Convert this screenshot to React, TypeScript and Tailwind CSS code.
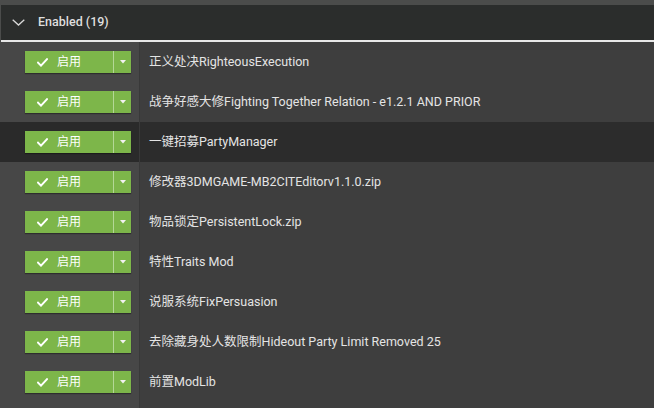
import React from 'react';

const mods = [
  '正义处决RighteousExecution',
  '战争好感大修Fighting Together Relation - e1.2.1 AND PRIOR',
  '一键招募PartyManager',
  '修改器3DMGAME-MB2CITEditorv1.1.0.zip',
  '物品锁定PersistentLock.zip',
  '特性Traits Mod',
  '说服系统FixPersuasion',
  '去除藏身处人数限制Hideout Party Limit Removed 25',
  '前置ModLib',
];

const font = { fontFamily: 'Roboto, "Noto Sans CJK SC", sans-serif' };

const EnableButton = () => (
  <div className="flex h-[22px] w-[106px] items-stretch bg-[#7db64a] text-white shadow-[0_1px_1px_rgba(0,0,0,0.35)]">
    <div className="flex flex-1 items-center gap-[9px] pl-[12px]">
      <svg width="11" height="9" viewBox="0 0 11 9" fill="none">
        <path d="M1 4.6 L4 7.6 L10 1.2" stroke="white" strokeWidth="2" strokeLinecap="square" />
      </svg>
      <span className="text-[12px] leading-none">启用</span>
    </div>
    <div className="w-px bg-[#b4d896]" />
    <div className="flex w-[17px] items-center justify-center">
      <svg width="6" height="4" viewBox="0 0 6 4">
        <path d="M0 0 L6 0 L3 3.5 Z" fill="#f2f2f2" />
      </svg>
    </div>
  </div>
);

export default function App() {
  return (
    <div className="flex h-screen w-full flex-col overflow-hidden bg-[#4b4c4b] pt-[5px]" style={font}>
      <div className="ml-[1px] flex h-[37px] items-center gap-[13px] border-b-2 border-[#e8e8e8] bg-[#2b2d2c] pl-[11px] pr-2">
        <svg width="13" height="7" viewBox="0 0 13 7" fill="none">
          <path d="M0.7 0.7 L6.5 6 L12.3 0.7" stroke="#d8d8d8" strokeWidth="1.3" />
        </svg>
        <span className="text-[12.5px] font-medium text-[#dedede]">Enabled (19)</span>
      </div>
      <div className="flex flex-1 flex-col bg-[#3e3e3e]">
        {mods.map((m, i) => {
          const active = i === 2;
          return (
            <div key={m} className={`flex h-[40px] items-center ${active ? 'bg-[#2c2c2c]' : ''}`}>
              <div
                className={`flex h-full w-[140px] items-center border-r border-[#393939] pl-[25px] ${
                  active ? 'bg-[#2a2a2a]' : 'bg-[#474747]'
                }`}
              >
                <EnableButton />
              </div>
              <span className="pl-[9px] text-[12.5px] text-[#e4e4e4]">{m}</span>
            </div>
          );
        })}
        <div className="flex flex-1">
          <div className="h-full w-[140px] border-r border-[#393939] bg-[#474747]" />
        </div>
      </div>
    </div>
  );
}
